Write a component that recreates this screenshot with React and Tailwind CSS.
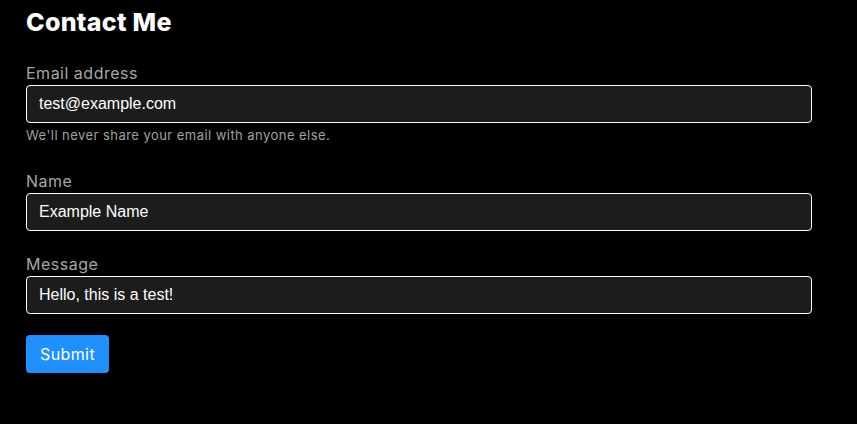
import React, { useState } from "react";

export default function App() {
  const [email, setEmail] = useState("test@example.com");
  const [name, setName] = useState("Example Name");
  const [message, setMessage] = useState("Hello, this is a test!");

  const labelClass = "block text-[16px] leading-6 tracking-[0.5px] text-[#a6a6a6]";
  const inputClass =
    "block w-full h-[38px] px-3 rounded-[4px] border border-white bg-[#1c1c1c] text-white text-[16px] outline-none font-['Liberation_Sans',Arial,sans-serif]";

  return (
    <div className="min-h-[424px] w-full bg-black font-['Inter','Open_Sans',sans-serif]">
      <div className="w-[786px] ml-[26px] pt-[7px]">
        <h1 className="text-[25px] leading-[30px] font-extrabold text-white tracking-[0.3px]">Contact Me</h1>

        <form className="mt-[24px]" onSubmit={(e) => e.preventDefault()}>
          {/* Email */}
          <div className="mb-6">
            <label className={labelClass}>Email address</label>
            <input
              type="email"
              value={email}
              onChange={(e) => setEmail(e.target.value)}
              className={inputClass}
            />
            <p className="mt-[2px] text-[13px] leading-5 tracking-[0.45px] text-[#a0a0a0]">
              We'll never share your email with anyone else.
            </p>
          </div>

          {/* Name */}
          <div className="mb-[21px]">
            <label className={labelClass}>Name</label>
            <input
              type="text"
              value={name}
              onChange={(e) => setName(e.target.value)}
              className={inputClass}
            />
          </div>

          {/* Message */}
          <div className="mb-[21px]">
            <label className={labelClass}>Message</label>
            <input
              type="text"
              value={message}
              onChange={(e) => setMessage(e.target.value)}
              className={inputClass}
            />
          </div>

          <button
            type="submit"
            className="w-[83px] h-[38px] rounded-[4px] bg-[#1e90ff] text-white text-[16px] tracking-[0.4px] flex items-center justify-center"
          >
            Submit
          </button>
        </form>
      </div>
    </div>
  );
}
